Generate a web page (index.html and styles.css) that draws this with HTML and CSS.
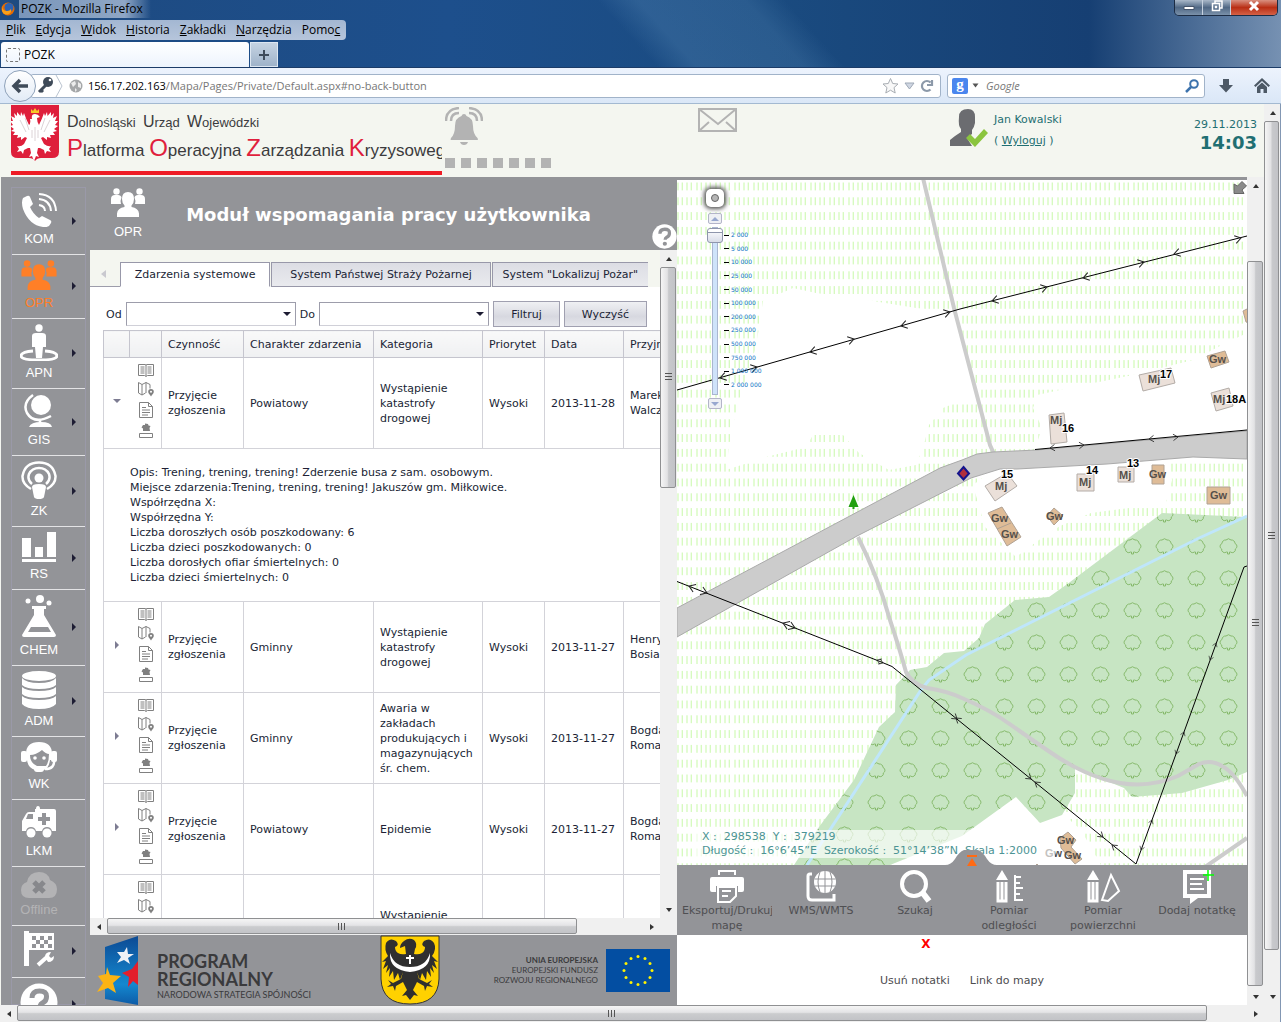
FILE: index.html
```html
<!DOCTYPE html>
<html lang="pl">

<head>
    <meta charset="UTF-8">
    <meta name="viewport" content="width=device-width, initial-scale=1.0">
    <title>POZK</title>
    <link rel="stylesheet" href="styles.css">
</head>

<body>
    <!-- shared icons -->
    <svg class="defs" width="0" height="0" aria-hidden="true">
        <symbol id="people" viewBox="0 0 34 30">
            <circle cx="5.500" cy="3.500" r="3.200" />
            <circle cx="28.500" cy="3.500" r="3.200" />
            <path d="M0 16v-5q0-4 4-4h3q3 0 3.500 2.500-1.500 3-.5 6.500zM34 16v-5q0-4-4-4h-3q-3 0-3.500 2.500 1.500 3 .5 6.500z" />
            <path d="M17 4q6 0 6 7 0 4-2.500 6.500v1.500q7 1 7.500 6.500V29H6v-3.500q.5-5.500 7.500-6.500v-1.500Q11 15 11 11q0-7 6-7z" />
        </symbol>
        <symbol id="book" viewBox="0 0 16 16">
            <path d="M.5 2.500h6.500l1 .5 1-.5h6.500v11H9.500L8 14.500 6.500 13.500H.5zM8 3v11M2.500 5h4M2.500 7h4M2.500 9h4M2.500 11h4M9.500 5h4M9.500 7h4M9.500 9h4M9.500 11h4" />
        </symbol>
        <symbol id="mapicon" viewBox="0 0 16 16">
            <path d="M.5 1.500 4 3.500l4-2 4 2v4M.5 1.500v10.500L4 14l3.500-2M4 3.500V14M8 1.500V12" />
            <path class="solid" d="M13 8a2.800 2.800 0 0 1 2.800 2.800c0 1.700-1.500 2.700-2.800 4.700-1.300-2-2.800-3-2.800-4.700A2.800 2.800 0 0 1 13 8zm0 1.800a1 1 0 1 0 0 2 1 1 0 0 0 0-2z" />
        </symbol>
        <symbol id="doc" viewBox="0 0 16 16">
            <path d="M1.500.5h9l4 4v11h-13zM10.500.5v4h4M4 5.500h4M4 8h8M4 10.500h8M4 13h6" />
        </symbol>
        <symbol id="stamp" viewBox="0 0 16 16">
            <path class="solid" d="M5 2h2V.5L10 1l.5 1.500 2 .5-1 2 .5 3H5V5.500L3.500 4.500z" />
            <path d="M1.500 10.500h13v4h-13z" />
        </symbol>
        <symbol id="rowicons" viewBox="0 0 16 79">
            <use href="#book" y="0" width="16" height="16" />
            <use href="#mapicon" y="19" width="16" height="16" />
            <use href="#doc" y="40" width="16" height="16" />
            <use href="#stamp" y="61" width="16" height="16" />
        </symbol>
        <symbol id="qmark" viewBox="0 0 38 38">
            <circle cx="19" cy="19" r="18.500" fill="#fff" />
            <path d="M12 15q0-7 7.500-7t7 6q0 4-4 6-2.500 1.500-2.500 4" fill="none" stroke="#939498" stroke-width="5" />
            <circle cx="19.500" cy="30" r="3.200" fill="#939498" />
        </symbol>
    </svg>

    <!-- browser window -->
    <div class="chrome">
        <div class="title-row">
            <svg width="14" height="14" viewBox="0 0 14 14"><circle cx="7" cy="7" r="6.500" fill="#e66a00" /><circle cx="8" cy="5.500" r="4.500" fill="#2c62b4" /><path d="M1 3q0 6 5 6 3 0 4-2 1 3-2 5Q3 14 1 9z" fill="#f9a01b" /></svg>
            <span class="win-title">POZK - Mozilla Firefox</span>
            <div class="win-buttons">
                <button type="button" aria-label="Minimalizuj"><svg width="12" height="12" viewBox="0 0 12 12"><path d="M1 6.500h10v3H1z" fill="#fff" stroke="#45546b" /></svg></button>
                <button type="button" aria-label="Przywróć"><svg width="12" height="12" viewBox="0 0 12 12"><path d="M4 3V1h7v7H9M1.500 3.500h7v7h-7zM4.500 6.500h1v1h-1z" fill="none" stroke="#fff" stroke-width="1.500" /></svg></button>
                <button type="button" class="close" aria-label="Zamknij"><svg width="12" height="12" viewBox="0 0 12 12"><path d="m2 2 8 8M10 2l-8 8" stroke="#fff" stroke-width="3" /></svg></button>
            </div>
        </div>
        <nav class="menu">
            <a href="#"><u>P</u>lik</a>
            <a href="#"><u>E</u>dycja</a>
            <a href="#"><u>W</u>idok</a>
            <a href="#"><u>H</u>istoria</a>
            <a href="#"><u>Z</u>akładki</a>
            <a href="#"><u>N</u>arzędzia</a>
            <a href="#">Pomo<u>c</u></a>
        </nav>
        <div class="browser-tabs">
            <div class="browser-tab"><i></i>POZK</div>
            <button type="button" class="new-tab" aria-label="Nowa karta"><svg width="12" height="12" viewBox="0 0 12 12"><path d="M6 1v10M1 6h10" stroke="#3f4c5c" stroke-width="2" /></svg></button>
        </div>
    </div>
    <div class="toolbar">
        <button type="button" class="back" aria-label="Wstecz"><svg width="18" height="16" viewBox="0 0 18 16"><path d="M17 8H4M9 2 3 8l6 6" fill="none" stroke="#3f4b59" stroke-width="3.500" /></svg></button>
        <div class="address">
            <svg width="34" height="22" viewBox="2 0 34 22"><path d="M6 17 13 10M8 15l2 2" stroke="#3f4b59" stroke-width="3" /><circle cx="15" cy="7" r="5" fill="#3f4b59" /><circle cx="17" cy="5" r="1.300" fill="#fff" /><path d="m23 0 6 11-6 11" fill="none" stroke="#b9c3cf" /></svg>
            <svg width="14" height="14" viewBox="0 0 14 14"><circle cx="7" cy="7" r="6.500" fill="#a5a7a9" /><path d="M2 4l4-2 1 3-3 3zM9 3l3 2v4l-3-1zM6 9l2 2-2 2z" fill="#ececec" /></svg>
            <label class="url"><b>156.17.202.163</b>/Mapa/Pages/Private/Default.aspx#no-back-button</label>
            <svg width="54" height="18" viewBox="0 0 54 18"><path d="m8.500 1.500 2.200 5 5.300.5-4 3.600 1.200 5.400-4.700-2.800L3.800 16 5 10.600 1 7l5.300-.5z" fill="#f8f8f8" stroke="#a8adb3" /><path d="M23 6h9l-4.500 6z" fill="#cfd6e2" stroke="#9ea8b6" /><path d="M48.500 12.500a5 5 0 1 1 0-7M50 3v5h-5" fill="none" stroke="#8c99a9" stroke-width="2.200" /></svg>
        </div>
        <div class="search">
            <span class="g">g</span>
            <svg width="7" height="5" viewBox="0 0 7 5"><path d="M.5.500h6l-3 4z" fill="#555" /></svg>
            <input type="text" placeholder="Google" aria-label="Szukaj w Google">
            <svg width="14" height="14" viewBox="0 0 14 14"><circle cx="9" cy="5" r="3.800" fill="none" stroke="#3d73ad" stroke-width="2" /><path d="M6 8l-5 5" stroke="#3d73ad" stroke-width="2.500" /></svg>
        </div>
        <svg class="down" width="14" height="14" viewBox="0 0 14 14"><path d="M4 0h6v6h4l-7 7.500L0 6h4z" fill="#4d5966" /></svg>
        <svg width="16" height="15" viewBox="0 0 16 15"><path d="m8 0 8 7.500-1.500 1.500L8 3 1.500 9 0 7.500zM3 9l5-4.500L13 9v6h-3.500v-4h-3v4H3z" fill="#4d5966" /></svg>
    </div>

    <div class="window">
        <div class="page">
            <header class="header">
                <div class="brand">
                    <svg width="48" height="56" viewBox="0 0 48 56">
                        <path d="M0 0h48v47q0 6-7 6H30q-4 0-6 3-2-3-6-3H7q-7 0-7-6z" fill="#de1f3b" />
                        <path d="M21 14q-1-5 3-5 3 0 5 3l-3 1q0 4 2 7 3-6 5-12l1 3 2-4 .5 4L40 7v4l3-3-1 5 4-2-2 5 3 0-3 4 3 1-4 3 3 2-4 1 2 3-5 0 1 3-4-1 0 3-4-3-2 1 3 6q4 3 7 2l-2 3 2 3-4-1-2 3-1-4-4-2-2 0-1 5 2 4-3-1-2 5-2-5-3 1 2-4-1-5-2 0-4 2-1 4-2-3-4 1 2-3-2-3q4 1 7-2l3-6-2-1-4 3 0-3-4 1 1-3-5 0 2-3-4-1 3-2-4-3 3-1-3-4h3l-2-5 4 2-1-5 3 3V7l3.500 4 .5-4 2 4 1-3q2 6 5 12 2-2 1-6z" fill="#fff" />
                        <path d="M20 8V4l2 2 2-3 2 3 2-2v4z" fill="#f7c928" />
                        <path d="M9 15l6 12M14 13l4 12M39 15l-6 12M34 13l-4 12M24 22v14M21 25v8M27 25v8" stroke="#dcd3d6" fill="none" />
                    </svg>
                    <div class="brand-text">
                        <p class="office"><b>D</b>olnośląski&nbsp; <b>U</b>rząd&nbsp; <b>W</b>ojewódzki</p>
                        <h1><b>P</b>latforma <b>O</b>peracyjna <b>Z</b>arządzania <b>K</b>ryzysowego</h1>
                    </div>
                </div>
                <div class="alerts">
                    <svg width="38" height="39" viewBox="0 0 38 39"><path d="M19 7q2 0 2.500 2Q28 11 28 19q0 8 4.500 12 1 2 0 2H6q-1 0 0-2 4-4 4-12 0-8 6.500-10Q17 7 19 7zM15 35h8q-1 3-4 3t-4-3z" fill="#b3b3b3" /><path d="M1 14Q1 2 14 1M6 14q0-8 8-8M37 14Q37 2 24 1M32 14q0-8-8-8" fill="none" stroke="#b3b3b3" stroke-width="2.500" /></svg>
                    <div class="squares"><i></i><i></i><i></i><i></i><i></i><i></i><i></i></div>
                </div>
                <svg class="mail" width="40" height="25" viewBox="0 0 40 25"><path d="M1 1h37v22H1zM1 1l19 15L38 1M1 23l10-9M38 23l-10-9" fill="none" stroke="#b3b3b3" stroke-width="2" /></svg>
                <div class="user">
                    <svg width="38" height="38" viewBox="0 0 38 38"><path d="M18 0q7 0 7 8v6q-1 5-3 7v4l-5 4 5 8H0V31q6-5 11-8v-3q-3-3-2-12 0-8 9-8z" fill="#6b6c70" /><path d="M17 29l4-4 5 5 9-10 4 4-13 14z" fill="#8bc53f" transform="translate(-1)" /></svg>
                    <div>Jan Kowalski<br>( <a href="#">Wyloguj</a> )</div>
                </div>
                <div class="clock">29.11.2013<strong>14:03</strong></div>
            </header>

            <div class="main">
                <div class="workspace">
                    <nav class="sidebar">
                        <a href="#"><span><svg width="36" height="34" viewBox="0 0 36 34"><path d="M2 5 6 3q2-1 3 1l3 7-3 3q3 7 9 11l3-2 8 4q2 1 1 3-2 5-8 4Q8 32 2 16 0 9 2 5z" /><path d="M18 12q6 1 6 6M18 6q11 1 12 12M18 1q16 1 17 17" fill="none" stroke="#fff" stroke-width="2" /></svg>KOM</span><i></i></a>
                        <a href="#" class="active"><span><svg width="36" height="31"><use href="#people" width="36" height="31" /></svg>OPR</span><i></i></a>
                        <a href="#"><span><svg width="38" height="37" viewBox="0 0 38 37"><circle cx="19" cy="4" r="3.700" /><path d="M12 12q0-3 4-3h6q4 0 4 3v11h-3l-1 11h-6l-1-11h-3z" /><path d="M13 27q-12 1-12 5 1 4 18 4t18-4q0-4-12-5" fill="none" stroke="#fff" stroke-width="3" /></svg>APN</span><i></i></a>
                        <a href="#"><span><svg width="32" height="34" viewBox="0 0 32 34"><circle cx="18" cy="11" r="10" /><path d="M10 1Q-1 9 4 19q7 12 24 3M17 25v4" fill="none" stroke="#fff" stroke-width="2.500" /><path d="M6 33q2-5 12-5t11 5z" /></svg>GIS</span><i></i></a>
                        <a href="#"><span><svg width="36" height="38" viewBox="0 0 36 38"><circle cx="18" cy="17" r="4.500" /><path d="M11 26q0-3 7-3t7 3l-2 10q-1 2-5 2t-5-2z" /><path d="M10 28Q1 23 1.500 15 4 1.500 18 1.500T34.500 15q.5 8-8.500 13M11 23q-5-4-3-10 3-6 10-6t10 6q2 6-3 10" fill="none" stroke="#fff" stroke-width="2.500" /></svg>ZK</span><i></i></a>
                        <a href="#"><span><svg width="34" height="30" viewBox="0 0 34 30"><path d="M0 6h9v19H0zM13 15h8v10h-8zM25 0h9v25h-9zM0 27h34v3H0z" /></svg>RS</span><i></i></a>
                        <a href="#"><span><svg width="34" height="43" viewBox="0 0 34 43"><circle cx="6" cy="6" r="2.500" /><circle cx="18" cy="4" r="4" /><circle cx="27" cy="8" r="2.500" /><path d="M10 11h14v3h-2v6l12 20q0 2-2 2H2q-2 0-2-2l12-20v-6h-2z" /><path d="M9 32h17l3 5H6z" fill="#939498" /></svg>CHEM</span><i></i></a>
                        <a href="#"><span><svg width="34" height="38" viewBox="0 0 34 38"><ellipse cx="17" cy="5" rx="17" ry="5" /><path d="M0 7q4 5 17 5t17-5v7q-4 4-17 4T0 14zM0 16q4 4 17 4t17-4v7q-4 4-17 4T0 23zM0 25q4 4 17 4t17-4v8q-4 5-17 5T0 33z" /></svg>ADM</span><i></i></a>
                        <a href="#"><span><svg width="36" height="30" viewBox="0 0 36 30"><path d="M5 12Q5 0 18 0t13 12v6h-2q-1 8-6 10h-9q-7-2-8-10H5z" /><path d="M9 13q6 0 12-5 4 4 7 4 0 8-3 12h-9q-7-3-7-11z" fill="#939498" /><path d="M33 18q1 9-9 9" fill="none" stroke="#fff" stroke-width="2.500" /><rect x="0" y="9" width="6" height="11" rx="2" /><rect x="30" y="9" width="6" height="11" rx="2" /><circle cx="14" cy="16" r="1.800" /><circle cx="23" cy="16" r="1.800" /><rect x="13" y="24" width="10" height="6" rx="3" /></svg>WK</span></a>
                        <a href="#"><span><svg width="34" height="34" viewBox="0 0 34 34"><path d="M13 4h1q0-3 2-3t2 3h14q2 0 2 2v20h-4q-1-4-5-4t-5 4h-6q-1-4-5-4t-5 4H0V16l4-7q1-2 3-2h6z" /><path d="M4 14l2-5h5v5zM20 8h4v4h4v4h-4v4h-4v-4h-4v-4h4z" fill="#939498" /><circle cx="9" cy="28" r="4.500" /><circle cx="25" cy="28" r="4.500" /></svg>LKM</span></a>
                        <a href="#" class="offline"><span><svg width="36" height="26" viewBox="0 0 36 26"><path d="M8 26q-8 0-8-8 0-6 6-8 2-10 12-10 9 0 11 8 7 3 7 9 0 9-8 9z" /><path d="m13 10 10 10M23 10 13 20" stroke="#87888c" stroke-width="5" /></svg>Offline</span></a>
                        <a href="#" class="tool"><span><svg width="32" height="36" viewBox="0 0 32 36"><path d="M1 0h5v35H1z" /><path d="M6 2h25v17H6z" /><path d="M9 5h4v4H9zM17 5h4v4h-4zM25 5h4v4h-4zM13 9h4v4h-4zM21 9h4v4h-4zM9 13h4v4H9zM17 13h4v4h-4zM25 13h4v4h-4z" fill="#939498" /><path d="M15 34l9-8" stroke="#fff" stroke-width="4" /><path d="M22 26q0-5 6-5l-2 4 2 2 3-2q0 6-6 6z" /></svg></span><i></i></a>
                        <a href="#" class="tool"><span><svg width="38" height="38"><use href="#qmark" width="38" height="38" /></svg></span><i></i></a>
                    </nav>

                    <section class="module">
                        <div class="module-title">
                            <div class="module-icon"><svg width="34" height="30"><use href="#people" width="34" height="30" /></svg>OPR</div>
                            <h2>Moduł wspomagania pracy użytkownika</h2>
                            <button type="button" class="help" aria-label="Pomoc"><svg width="25" height="25"><use href="#qmark" width="25" height="25" /></svg></button>
                        </div>
                        <div class="scroll-area">
                            <div class="content">
                                <div class="tabs">
                                    <span class="prev"></span>
                                    <button type="button" class="selected">Zdarzenia systemowe</button>
                                    <button type="button">System Państwej Straży Pożarnej</button>
                                    <button type="button">System "Lokalizuj Pożar"</button>
                                </div>
                                <form class="filter">
                                    <label for="from">Od</label>
                                    <div class="combo"><select id="from"><option></option></select></div>
                                    <label for="to">Do</label>
                                    <div class="combo"><select id="to"><option></option></select></div>
                                    <button type="button">Filtruj</button>
                                    <button type="button">Wyczyść</button>
                                </form>
                                <table class="events">
                                    <colgroup><col class="c1"><col class="c2"><col class="c3"><col class="c4"><col class="c5"><col class="c6"><col class="c7"><col class="c8"></colgroup>
                                    <thead>
                                        <tr><th></th><th></th><th>Czynność</th><th>Charakter zdarzenia</th><th>Kategoria</th><th>Priorytet</th><th>Data</th><th>Przyjmujący</th></tr>
                                    </thead>
                                    <tbody>
                                        <tr>
                                            <td class="toggle open"><i></i></td>
                                            <td class="acts"><svg width="16" height="79"><use href="#rowicons" width="16" height="79" /></svg></td>
                                            <td>Przyjęcie zgłoszenia</td><td>Powiatowy</td><td>Wystąpienie katastrofy drogowej</td><td>Wysoki</td><td>2013-11-28</td><td>Marek<br>Walczak</td>
                                        </tr>
                                        <tr class="detail">
                                            <td colspan="8">Opis: Trening, trening, trening! Zderzenie busa z sam. osobowym.<br>Miejsce zdarzenia:Trening, trening, trening! Jakuszów gm. Miłkowice.<br>Współrzędna X:<br>Współrzędna Y:<br>Liczba doroszłych osób poszkodowany: 6<br>Liczba dzieci poszkodowanych: 0<br>Liczba dorosłych ofiar śmiertelnych: 0<br>Liczba dzieci śmiertelnych: 0</td>
                                        </tr>
                                        <tr>
                                            <td class="toggle"><i></i></td>
                                            <td class="acts"><svg width="16" height="79"><use href="#rowicons" width="16" height="79" /></svg></td>
                                            <td>Przyjęcie zgłoszenia</td><td>Gminny</td><td>Wystąpienie katastrofy drogowej</td><td>Wysoki</td><td>2013-11-27</td><td>Henryk<br>Bosiak</td>
                                        </tr>
                                        <tr>
                                            <td class="toggle"><i></i></td>
                                            <td class="acts"><svg width="16" height="79"><use href="#rowicons" width="16" height="79" /></svg></td>
                                            <td>Przyjęcie zgłoszenia</td><td>Gminny</td><td>Awaria w zakładach produkujących i magazynujących śr. chem.</td><td>Wysoki</td><td>2013-11-27</td><td>Bogdan<br>Roman</td>
                                        </tr>
                                        <tr>
                                            <td class="toggle"><i></i></td>
                                            <td class="acts"><svg width="16" height="79"><use href="#rowicons" width="16" height="79" /></svg></td>
                                            <td>Przyjęcie zgłoszenia</td><td>Powiatowy</td><td>Epidemie</td><td>Wysoki</td><td>2013-11-27</td><td>Bogdan<br>Roman</td>
                                        </tr>
                                        <tr class="tall">
                                            <td class="toggle"><i></i></td>
                                            <td class="acts"><svg width="16" height="79"><use href="#rowicons" width="16" height="79" /></svg></td>
                                            <td></td><td></td><td>Wystąpienie katastrofy drogowej</td><td></td><td></td><td></td>
                                        </tr>
                                    </tbody>
                                </table>
                            </div>
                            <div class="vbar panel-v"><i class="up"></i><div class="track"><div class="thumb"></div></div><i class="dn"></i></div>
                            <div class="hbar panel-h"><i class="lt"></i><div class="track"><div class="thumb"></div></div><i class="rt"></i></div>
                        </div>
                        <footer class="logos">
                            <div class="program">
                                <svg width="44" height="70" viewBox="0 0 44 70"><defs><linearGradient id="sky" x2="0" y2="1"><stop offset="0" stop-color="#0c4a94" /><stop offset=".7" stop-color="#1488cf" /><stop offset="1" stop-color="#0d5ba7" /></linearGradient></defs><path d="M8 12 41 1v69L8 64z" fill="url(#sky)" /><path d="m30 12 1 7h6l-6 4 2 6-6-4-7 3 4-6-4-5h7z" fill="#eef1f6" /><path d="m41 26-6 8-10 4 7 4-1 10 5-6 5 4z" fill="#e31e2b" /><path d="m10 32 3 8 11 1-8 7 3 10-8-5-11 4 6-9-5-7 8-2z" fill="#fbb414" /></svg>
                                <div>
                                    <p class="name">PROGRAM<br>REGIONALNY</p>
                                    <p class="motto">NARODOWA STRATEGIA SPÓJNOŚCI</p>
                                </div>
                            </div>
                            <svg width="60" height="70" viewBox="0 0 60 70">
                                <path d="M1 1h58v43Q58 69 30 69T1 44z" fill="#ffd100" stroke="#333" />
                                <path d="M24 6q5-4 10-1 4 4 1 9l-1 5q5 1 8-1 3-2 3-6-5-2-1-6 6-4 10 2 3 6-2 13l6 6-4-1 3 8-5-4 2 8-4-5 1 9-4-6-1 9-4-7-2 7-3-8 2 7 8 4 5-3-3 4 4 3-6-1-2 5-1-5-7-4-4 8 5 6-4-1-4 5-4-5-4 1 5-6-4-8-7 4-1 5-2-5-6 1 4-3-3-4 5 3 8-4 2-7-3 8-2-7-4 7-1-9-4 6 1-9-4 5 2-8-5 4 3-8-4 1 6-6Q4 15 6 8q4-6 10-2 4 4-1 6 0 4 3 6 3 2 8 1l-1-8-5 2q0-4 4-7z" fill="#2f2f2f" />
                                <path d="M10 18q4 14 20 14t20-14q1 17-20 19Q9 35 10 18z" fill="#fff" /><path d="M30 20v9M26 23h8" stroke="#fff" stroke-width="2" />
                            </svg>
                            <div class="eu">
                                <p><b>UNIA EUROPEJSKA</b><br>EUROPEJSKI FUNDUSZ<br>ROZWOJU REGIONALNEGO</p>
                                <svg width="64" height="43" viewBox="0 0 64 43"><path d="M0 0h64v43H0z" fill="#034ea2" /><g fill="#fff200"><circle cx="32" cy="7.500" r="1.500" /><circle cx="39" cy="9.500" r="1.500" /><circle cx="44" cy="14.500" r="1.500" /><circle cx="46" cy="21.500" r="1.500" /><circle cx="44" cy="28.500" r="1.500" /><circle cx="39" cy="33.500" r="1.500" /><circle cx="32" cy="35.500" r="1.500" /><circle cx="25" cy="33.500" r="1.500" /><circle cx="20" cy="28.500" r="1.500" /><circle cx="18" cy="21.500" r="1.500" /><circle cx="20" cy="14.500" r="1.500" /><circle cx="25" cy="9.500" r="1.500" /></g></svg>
                            </div>
                        </footer>
                    </section>

                    <section class="map-panel">
                        <div class="map">
                            <svg class="map-canvas" viewBox="677 180 570 685" preserveAspectRatio="xMinYMin slice">
                                <defs>
                                    <pattern id="grass" x="962" y="182.500" width="19" height="14.800" patternUnits="userSpaceOnUse">
                                        <path d="M1 0v8M5.300 0v8M10 0v8M14.300 0v8" stroke="#d4fabc" stroke-width="1.300" />
                                    </pattern>
                                    <pattern id="trees" x="1116" y="530" width="32" height="32" patternUnits="userSpaceOnUse">
                                        <path d="M14.500 22a3 3 0 0 1-4.800-3 3 3 0 0 1 .3-5.500 3.500 3.500 0 0 1 4-3.500 3.500 3.500 0 0 1 5 0 3.500 3.500 0 0 1 4 3.500 3 3 0 0 1 .3 5.500 3 3 0 0 1-4.800 3h-1v2h-2v-2z" fill="none" stroke="#86b96c" />
                                    </pattern>
                                    <path id="al" d="M6-4 0 0l6 4" fill="none" stroke="#222" />
                                </defs>
                                <path d="M677 180h570v685H677z" fill="#fff" />
                                <path d="M677 180h570v685H677z" fill="url(#grass)" />
                                <!-- plots without grass -->
                                <path fill="#fff" d="M763 301l30-13 23 5 57 8 43 7 39 4 21 86-23 6-10 4-14 17-6 23-7 17-27 5-30-17-16-18h-30l-7 12-40 10-40 13 5-37 8-33 17-53z" />
                                <path fill="#fff" d="M1037 395l23-5 73-15 60-15 27-14 27-13v110h-210l5-15-9-20zM1000 465l-27 20 12 42 31 30 23-17 21-14 31-13 75-10 6-23-5-22zM946 840l70-43 23 25 23-9 19 17 20 35H890z" />
                                <!-- forest -->
                                <path d="M1162 513l85 4v255l-19 8-46 13-50 4-8-9-49-20v25l-13 22-22 8-24-26-54 39-72 29h-96l25-38 35-47 25-53 16-15 1-27 14-15 17-3 17-14 20-2 15-13 6-14 30-24 34-3 17-12z" fill="#c7e5c3" />
                                <path d="M1162 513l85 4v255l-19 8-46 13-50 4-8-9-49-20v25l-13 22-22 8-24-26-54 39-72 29h-96l25-38 35-47 25-53 16-15 1-27 14-15 17-3 17-14 20-2 15-13 6-14 30-24 34-3 17-12z" fill="url(#trees)" />
                                <path d="M1247 516l-50 23-231 116-37 25-8 10-114 175" fill="none" stroke="#bfe6fb" stroke-width="3" />
                                <!-- roads -->
                                <path d="M923 178l31 130 36 137 4 9M858 537q20 40 32 83 10 30 16 52 6 12 21 16 20 3 35 10 30 13 46 25l39 27q20 14 38 22t35 11q30 5 58-7l21-12q12-5 23 2 12 6 25 30M1247 838l-42 29" fill="none" stroke="#ccc" stroke-width="4" />
                                <path d="M677 608 940 468l22-8 15-6 16-2 44-2 210-19v28l-54-2-86 7-90 5h-17l-29 9-114 58-180 101z" fill="#ccc" stroke="#aaa" stroke-width="1" />
                                <!-- power lines -->
                                <path d="M677 390l283-81 287-73M1035 449.500l212-19.500M677 581.500l203 80 12 5L1136 864l108-297 3-1" fill="none" stroke="#000" />
                                <g>
                                    <use href="#al" transform="translate(720 378)rotate(-15)" /><use href="#al" transform="translate(757 367)rotate(165)" />
                                    <use href="#al" transform="translate(810 352)rotate(-15)" /><use href="#al" transform="translate(854 339)rotate(165)" />
                                    <use href="#al" transform="translate(901 326)rotate(-15)" /><use href="#al" transform="translate(950 312)rotate(165)" />
                                    <use href="#al" transform="translate(992 301)rotate(-15)" /><use href="#al" transform="translate(1047 287)rotate(165)" />
                                    <use href="#al" transform="translate(1083 278)rotate(-15)" /><use href="#al" transform="translate(1144 262)rotate(165)" />
                                    <use href="#al" transform="translate(1174 254)rotate(-15)" /><use href="#al" transform="translate(1241 238)rotate(165)" />
                                    <use href="#al" transform="translate(1050 448)rotate(-5)scale(.8)" /><use href="#al" transform="translate(1084 445)rotate(175)scale(.8)" />
                                    <use href="#al" transform="translate(1149 439)rotate(-5)scale(.8)" /><use href="#al" transform="translate(1178 437)rotate(175)scale(.8)" />
                                    <use href="#al" transform="translate(689 586)rotate(22)" /><use href="#al" transform="translate(707 593)rotate(202)" />
                                    <use href="#al" transform="translate(783 623)rotate(22)" /><use href="#al" transform="translate(795 628)rotate(202)" />
                                    <use href="#al" transform="translate(877 660)rotate(22)scale(.7)" /><use href="#al" transform="translate(883 663)rotate(202)scale(.7)" />
                                    <use href="#al" transform="translate(956 718)rotate(39)scale(.8)" /><use href="#al" transform="translate(957 719)rotate(219)scale(.8)" />
                                    <use href="#al" transform="translate(1031 779)rotate(219)scale(.8)" /><use href="#al" transform="translate(1035 782)rotate(39)scale(.8)" />
                                    <use href="#al" transform="translate(1103 837)rotate(219)scale(.8)" /><use href="#al" transform="translate(1112 845)rotate(39)scale(.8)" />
                                    <use href="#al" transform="translate(1141 850)rotate(-70)scale(.6)" /><use href="#al" transform="translate(1152 820)rotate(110)scale(.6)" />
                                    <use href="#al" transform="translate(1176 754)rotate(-70)scale(.6)" /><use href="#al" transform="translate(1184 732)rotate(110)scale(.6)" />
                                    <use href="#al" transform="translate(1210 660)rotate(-70)scale(.6)" /><use href="#al" transform="translate(1216 643)rotate(110)scale(.6)" />
                                </g>
                                <!-- buildings -->
                                <path d="M1139 375l32-7 4 15-32 8zM1211 393l18-5 4 18-17 5zM1049 415l15-2 3 29-16 2zM985 486l22-13 10 13-22 15zM1077 474h17v17h-17zM1118 467h16v15h-16z" fill="#ebe0d9" stroke="#b3aca7" />
                                <path d="M1243 311l6-3v15l-3-1zM1207 356l18-5 4 11-18 6zM1152 465h12v19h-12zM1207 487h23v17h-23zM1054 508l9 8-9 9-7-9zM988 513l14-6 19 30-14 9zM997 529l14-6M1060 838l8-6 8 8-5 7 11 12-7 5-14-16zM1035 866l2-2 2 2" fill="#dfbc97" stroke="#b0a294" />
                                <g class="labels">
                                    <text x="1148" y="383">Mj</text><text x="1213" y="403">Mj</text><text x="1050" y="424">Mj</text><text x="995" y="490">Mj</text><text x="1079" y="486">Mj</text><text x="1119" y="479">Mj</text>
                                    <text x="1209" y="363">Gw</text><text x="1149" y="478">Gw</text><text x="1210" y="499">Gw</text><text x="1046" y="520">Gw</text><text x="991" y="522">Gw</text><text x="1001" y="538">Gw</text><text x="1057" y="844">Gw</text><text x="1045" y="857">Gw</text><text x="1064" y="859">Gw</text>
                                </g>
                                <g class="numbers">
                                    <text x="1160" y="378">17</text><text x="1226" y="403">18A</text><text x="1062" y="432">16</text><text x="1001" y="478">15</text><text x="1086" y="474">14</text><text x="1127" y="467">13</text>
                                </g>
                                <path d="M963.500 467l5.500 6.500-5.500 6-5.500-6z" fill="#b02f3c" stroke="#14148c" stroke-width="2" />
                                <path d="M853.500 495l5 12h-4v2h-2v-2h-4z" fill="#22a010" />
                            </svg>

                            <div class="zoom">
                                <button type="button" class="pan" aria-label="Przesuń mapę"><i></i></button>
                                <button type="button" class="step" aria-label="Przybliż"><i class="tri-up"></i></button>
                                <div class="scale">
                                    <input type="range" min="0" max="100" value="0" aria-label="Skala mapy">
                                    <ul>
                                        <li>2 000</li><li>5 000</li><li>10 000</li><li>25 000</li><li>50 000</li><li>100 000</li><li>200 000</li><li>250 000</li><li>500 000</li><li>750 000</li><li>1 000 000</li><li>2 000 000</li>
                                    </ul>
                                </div>
                                <button type="button" class="step" aria-label="Oddal"><i class="tri-dn"></i></button>
                            </div>
                            <svg class="shrink" width="14" height="14" viewBox="0 0 14 14"><path d="m9 .5 4.500 4.500-4.500 4 2 3.500H1V3l3.500 2z" fill="#8a8a8a" stroke="#666" /></svg>
                            <div class="coords">X :&nbsp; 298538&nbsp; Y :&nbsp; 379219<br>Długość :&nbsp; 16°6’45”E&nbsp; Szerokość :&nbsp; 51°14’38”N&nbsp; Skala 1:2000</div>
                            <svg class="pull" width="52" height="18" viewBox="0 0 52 18"><path d="M0 16q6 0 10-6 4-7 9-9h14q5 2 9 9 4 6 10 6v2H0z" fill="#939498" /><path d="M22 6h10v2H22zM27 9l5 8H22z" fill="#ff6a13" /></svg>
                        </div>
                        <div class="map-tools">
                            <button type="button"><svg width="34" height="34" viewBox="0 0 34 34"><path d="M9 5V1h16v4M7 15h20" /><path class="w" d="M2 7h30q2 0 2 2v11q0 2-2 2h-4v-6H6v6H2q-2 0-2-2V9q0-2 2-2z" /><path d="M8 17h18v9l-6 6H8zM12 21h9M12 26h6" /></svg><span class="nowrap">Eksportuj/Drukuj</span> mapę</button>
                            <button type="button"><svg width="32" height="34" viewBox="0 0 32 34"><path d="M7 4H5Q3 4 3 6v20q0 4 4 4h22v-6" stroke-width="3" /><circle class="w" cx="20" cy="12" r="11" /><path d="M20 1v22M9.500 9h21M9.500 16h21M15 2q-4 10 0 20M25 2q4 10 0 20" stroke="#939498" stroke-width="1" /></svg>WMS/WMTS</button>
                            <button type="button"><svg width="34" height="34" viewBox="0 0 34 34"><circle cx="16" cy="14" r="12" stroke-width="4" /><path d="m24 22 7 9" stroke-width="6" /></svg>Szukaj</button>
                            <button type="button"><svg width="34" height="34" viewBox="0 0 34 34"><path class="w" d="M4 10 10 0l6 10z" /><path d="M6 12v19h8V12M10 12v20" stroke-width="3" /><path d="M23 5v26M23 7h6M23 13h5M23 18h8M23 24h5M23 30h8" /></svg>Pomiar odległości</button>
                            <button type="button"><svg width="36" height="34" viewBox="0 0 36 34"><path class="w" d="M2 10 8 0l6 10z" /><path d="M4 12v19h8V12M8 12v20" stroke-width="3" /><path d="M17 30l9-25 8 16-11 10z" /></svg>Pomiar powierzchni</button>
                            <button type="button"><svg width="34" height="34" viewBox="0 0 34 34"><path class="w" d="M3 0h28v28H18l-8 6v-6H3z" /><path d="M7 4h20v20H7z" fill="#939498" stroke="none" /><path d="M10 9h14M10 14h12M10 19h14" /><path d="M28 0v11M23 5h11" stroke="#0f0" stroke-width="1.500" /></svg>Dodaj notatkę</button>
                        </div>
                        <div class="map-links">
                            <button type="button" class="x">X</button>
                            <div><a href="#">Usuń notatki</a><a href="#">Link do mapy</a></div>
                        </div>
                    </section>
                </div>
                <div class="vbar map-v"><i class="up"></i><div class="track"><div class="thumb"></div></div><i class="dn"></i></div>
            </div>
        </div>
        <div class="vbar page-v"><i class="up"></i><div class="track"><div class="thumb"></div></div><i class="dn"></i></div>
        <div class="hbar page-h"><i class="lt"></i><div class="track"><div class="thumb"></div></div><i class="rt"></i></div>
    </div>
</body>

</html>
```
FILE: styles.css
```css
* {
    box-sizing: border-box;
    margin: 0;
    padding: 0;
}

body {
    display: flex;
    flex-direction: column;
    height: 100vh;
    overflow: hidden;
    background-color: #f4f6f0;
    color: #201f35;
    font: 11px/15px "DejaVu Sans", Verdana, sans-serif;
}

button,
input,
select {
    font: inherit;
    color: inherit;
    border: 0;
    background: none;
}

a {
    color: inherit;
    text-decoration: none;
}

svg {
    flex: none;
    display: block;
}

.defs {
    position: absolute;
}

/* browser window */
.chrome {
    flex: none;
    background: linear-gradient(48deg, transparent 49%, rgba(90, 140, 185, .3) 52%, rgba(90, 140, 185, .25) 60%, transparent 63%),
        linear-gradient(to right, #1e4a80, #1d4f8c 35%, #1a4b80 60%, #163f73 85%, #7691b2 100%);
    border-bottom: 1px solid #1c3c68;
    color: #000;
    font: 12px/18px "Open Sans", "Noto Sans", sans-serif;
}

.title-row {
    display: flex;
    align-items: flex-start;
    gap: 4px;
    height: 20px;
    padding: 0 3px 0 1px;
}

.title-row > svg {
    margin-top: 2px;
}

.win-title {
    padding: 0 8px 0 2px;
    background: linear-gradient(to right, #7a96ba, #8ea6c5 80%, transparent);
}

.win-buttons {
    display: flex;
    margin-left: auto;
    border: 1px solid #1c2c44;
    border-top: 0;
    border-radius: 0 0 5px 5px;
    overflow: hidden;
}

.win-buttons button {
    display: flex;
    justify-content: center;
    width: 28px;
    height: 15px;
    border-right: 1px solid #c5d1df;
    background: linear-gradient(#a9b8c9, #506885 50%, #7b91aa);
}

.win-buttons .close {
    width: 46px;
    border: 0;
    background: linear-gradient(#d99080, #b92f15 50%, #d56146);
}

.menu {
    display: flex;
    gap: 10px;
    width: max-content;
    height: 20px;
    padding: 1px 6px;
    border-radius: 0 4px 4px 0;
    background: linear-gradient(#a3b7d2, #b6c5db);
}

.browser-tabs {
    display: flex;
    gap: 1px;
    padding-top: 2px;
}

.browser-tab {
    display: flex;
    align-items: center;
    gap: 4px;
    width: 248px;
    height: 25px;
    margin-left: 1px;
    padding-left: 5px;
    border-radius: 3px 3px 0 0;
    background: linear-gradient(#fff, #edf4fd);
}

.browser-tab i {
    width: 14px;
    height: 14px;
    border: 1px dashed #777;
    border-radius: 2px;
}

.new-tab {
    display: flex;
    align-items: center;
    justify-content: center;
    width: 28px;
    border: 1px solid #dce6f1;
    background: linear-gradient(#c5d3e2, #9fb3ca);
}

.toolbar {
    flex: none;
    display: flex;
    align-items: center;
    height: 36px;
    padding: 0 11px 0 4px;
    border-bottom: 1px solid #a3b9d1;
    background: linear-gradient(#edf3fd, #dae7f7);
    font: 11px/18px "Open Sans", "Noto Sans", sans-serif;
}

.back {
    display: flex;
    align-items: center;
    justify-content: center;
    flex: none;
    width: 32px;
    height: 32px;
    border: 1px solid #8fa2ba;
    border-radius: 50%;
    background: linear-gradient(#fff, #e2ebf6);
    z-index: 1;
}

.address,
.search {
    display: flex;
    align-items: center;
    height: 24px;
    border: 1px solid #a1b3c9;
    border-radius: 3px;
    background-color: #fff;
}

.address {
    flex: 1;
    margin-left: -6px;
    padding: 0 4px;
}

.url {
    flex: 1;
    padding-left: 5px;
    color: #777;
    white-space: nowrap;
}

.url b {
    color: #000;
    font-weight: normal;
}

.search {
    width: 258px;
    gap: 4px;
    margin: 0 14px 0 6px;
    padding: 0 5px 0 4px;
}

.search input {
    flex: 1;
    min-width: 0;
    padding-left: 3px;
    outline: 0;
}

.search input::placeholder {
    color: #777;
    font-style: italic;
}

.search .g {
    width: 16px;
    height: 16px;
    border-radius: 2px;
    background-color: #4a86ee;
    color: #fff;
    font: bold 15px/12px "Liberation Serif", serif;
    text-align: center;
}

.down {
    margin-right: 21px;
}

/* page and its scrollbars */
.window {
    flex: 1;
    min-height: 0;
    display: grid;
    grid-template: minmax(0, 1fr) 17px / minmax(0, 1fr) 16px;
    border-right: 1px solid #8297b3;
    background-color: #f0f0f0;
}

.page {
    display: flex;
    flex-direction: column;
    min-height: 0;
    background-color: #f4f6f0;
}

.vbar,
.hbar {
    display: flex;
    background-color: #f0f0f0;
}

.vbar {
    flex: none;
    flex-direction: column;
}

.vbar > i,
.hbar > i {
    display: flex;
    flex: none;
    align-items: center;
    justify-content: center;
    width: 17px;
    height: 17px;
}

.vbar > i::before,
.hbar > i::before {
    content: "";
    border: 3px solid transparent;
}

.up::before {
    border-bottom: 4px solid #333 !important;
    border-top: 0 !important;
}

.dn::before {
    border-top: 4px solid #333 !important;
    border-bottom: 0 !important;
}

.lt::before {
    border-right: 4px solid #333 !important;
    border-left: 0 !important;
}

.rt::before {
    border-left: 4px solid #333 !important;
    border-right: 0 !important;
}

.track {
    flex: 1;
    display: flex;
    min-width: 0;
    min-height: 0;
}

.vbar .track {
    flex-direction: column;
}

.track::before,
.track::after {
    content: "";
}

.thumb {
    display: flex;
    align-items: center;
    justify-content: center;
    border: 1px solid #8f9092;
    border-radius: 2px;
    background: linear-gradient(to right, #f5f5f5, #e2e2e4 45%, #c8c9cc 55%, #c2c3c7);
}

.vbar .thumb {
    margin-right: 1px;
}

.hbar .thumb {
    margin-bottom: 1px;
    background: linear-gradient(#f5f5f5, #e4e4e6 45%, #cbccce 55%, #c2c3c7);
}

.thumb::before {
    content: "";
    width: 7px;
    height: 8px;
    background: repeating-linear-gradient(#555 0 1px, transparent 1px 3px);
}

.hbar .thumb::before {
    width: 8px;
    height: 7px;
    background: repeating-linear-gradient(to right, #555 0 1px, transparent 1px 3px);
}

.page-v .thumb {
    flex: 828;
}

.page-v .track::after {
    flex: 38;
}

.page-h .thumb {
    flex: 1190;
}

.page-h .track::after {
    flex: 40;
}

.map-v .track::before {
    flex: 67;
}

.map-v .thumb {
    flex: 725;
}

.map-v .track::after {
    flex: 2;
}

.panel-v .thumb {
    flex: 219;
}

.panel-v .track::after {
    flex: 414;
}

.panel-h .thumb {
    flex: 470;
}

.panel-h .track::after {
    flex: 66;
}

/* header */
.header {
    flex: none;
    display: grid;
    grid-template-columns: 434px 253fr 252fr 120fr 187fr;
    height: 73px;
    padding: 1px 7px 0 11px;
    color: #1f6f72;
}

.brand {
    display: flex;
    gap: 8px;
    width: 431px;
    height: 70px;
    border-bottom: 4px solid #ee1c25;
    overflow: hidden;
}

.brand-text {
    font-family: "Liberation Sans", Arial, sans-serif;
    color: #3b3b3d;
    white-space: nowrap;
}

.brand-text b {
    font-weight: normal;
}

.office {
    padding-top: 7px;
    font-size: 13px;
    line-height: 20px;
}

.office b {
    font-size: 16px;
}

.brand-text h1 {
    font-size: 17px;
    font-weight: normal;
    line-height: 30px;
}

.brand-text h1 b {
    color: #e01f3d;
    font-size: 24px;
}

.alerts {
    padding-top: 2px;
}

.squares {
    display: flex;
    gap: 6px;
    padding-top: 12px;
}

.squares i {
    width: 10px;
    height: 10px;
    background-color: #b3b3b3;
}

.mail {
    margin-top: 3px;
}

.user {
    display: flex;
    gap: 6px;
    padding-top: 4px;
    line-height: 21px;
    white-space: nowrap;
}

.user a {
    text-decoration: underline;
}

.clock {
    padding-top: 12px;
    text-align: right;
}

.clock strong {
    display: block;
    font-size: 18px;
    line-height: 22px;
}

/* main area */
.main {
    flex: 1;
    display: flex;
    min-height: 0;
}

.workspace {
    flex: 1;
    display: flex;
    min-width: 0;
    margin-left: 1px;
    border-top: 3px solid #939498;
    background-color: #939498;
    overflow: hidden;
}

.sidebar {
    flex: none;
    width: 75px;
    margin: 7px 4px 0 10px;
    border: 1px solid #9a99a8;
    font: 13px/18px "Liberation Sans", Arial, sans-serif;
    color: #fff;
}

.sidebar a {
    display: flex;
    align-items: center;
    padding-top: 5px;
    border-bottom: 1px solid #e3e3e5;
    fill: currentColor;
}

.sidebar span {
    display: flex;
    flex-direction: column;
    align-items: center;
    gap: 3px;
    width: 54px;
    padding-bottom: 6px;
}

.sidebar .tool span {
    padding-bottom: 10px;
}

.sidebar a > i {
    margin: 0 0 6px 6px;
    border: 4px solid transparent;
    border-left-color: #1d1c33;
    border-right: 0;
}

.sidebar .active {
    color: #ff7f27;
}

.sidebar .offline {
    color: #b3b3b5;
}

.module {
    flex: 587 1 0;
    display: flex;
    flex-direction: column;
    min-width: 0;
}

.module-title {
    flex: none;
    display: flex;
    align-items: center;
    height: 70px;
    padding-left: 21px;
    color: #fff;
}

.module-icon {
    display: flex;
    flex-direction: column;
    align-items: center;
    gap: 5px;
    padding-bottom: 2px;
    font: 13px/18px "Liberation Sans", Arial, sans-serif;
    fill: #fff;
}

.module-title h2 {
    flex: 1;
    padding-right: 20px;
    font-size: 18px;
    line-height: 24px;
    text-align: center;
    white-space: nowrap;
}

.help {
    align-self: flex-end;
    margin-bottom: 1px;
}

.scroll-area {
    flex: 1;
    display: grid;
    grid-template: minmax(0, 1fr) 17px / minmax(0, 1fr) 17px;
    min-height: 0;
    background-color: #f0f0f0;
}

.content {
    overflow: hidden;
    background-color: #fff;
}

.tabs {
    display: grid;
    grid-template-columns: 29px 151fr 220fr 157fr;
    align-items: end;
    column-gap: 1px;
    height: 37px;
    padding-right: 12px;
    background-color: #f4f6f0;
    white-space: nowrap;
}

.tabs .prev {
    align-self: stretch;
    display: flex;
    align-items: center;
    margin-right: -1px;
    padding: 12px 0 0 11px;
    border-bottom: 1px solid #9d9dab;
}

.prev::before {
    content: "";
    border: 4px solid transparent;
    border-right: 5px solid #c9c9cf;
    border-left: 0;
}

.tabs button {
    height: 25px;
    min-width: 0;
    border: 1px solid #9898a9;
    background: linear-gradient(#dcdde4, #e9eaee);
}

.tabs button:last-child {
    border-right: 0;
}

.tabs .selected {
    border-bottom-color: #fff;
    background: #fff;
}

.filter {
    display: flex;
    align-items: center;
    gap: 4px;
    padding: 14px 13px 3px 16px;
}

.combo {
    position: relative;
    flex: 1;
    border: 1px solid #9d9dab;
    border-bottom-color: #d0d0d8;
}

.combo::after {
    content: "";
    position: absolute;
    right: 4px;
    top: 9px;
    border: 4px solid transparent;
    border-top-color: #1d1c33;
    border-bottom: 0;
    pointer-events: none;
}

.combo select {
    display: block;
    width: 100%;
    height: 22px;
    appearance: none;
    background-color: #fff;
}

.filter button {
    height: 26px;
    padding: 0 17px;
    border: 1px solid #a0a0b0;
    background: linear-gradient(#eff0f3, #d7d8e0 60%, #e5e6eb);
}

.events {
    width: 660px;
    margin-left: 13px;
    border-collapse: collapse;
    table-layout: fixed;
    border-top: 1px solid #9898a9;
    border-left: 1px solid #9898a9;
}

.c1 { width: 26px; }
.c2 { width: 32px; }
.c3 { width: 82px; }
.c4 { width: 130px; }
.c5 { width: 109px; }
.c6 { width: 62px; }
.c7 { width: 79px; }

.events th {
    height: 27px;
    padding: 0 6px;
    border: 1px solid #c5c5ce;
    background: linear-gradient(#f9f9f9, #eff0f2);
    font-weight: normal;
    text-align: left;
    white-space: nowrap;
}

.events td {
    height: 91px;
    padding: 0 0 0 6px;
    border: 1px solid #d3d3d9;
}

.events .toggle {
    padding: 0;
    border-right: 0;
}

.toggle + td {
    border-left: 0;
}

.toggle i {
    display: block;
    width: 0;
    margin: 0 auto 4px;
    border: 4px solid transparent;
    border-left-color: #7d7c92;
    border-right: 0;
}

.toggle.open i {
    border-top-color: #7d7c92;
    border-right: 4px solid transparent;
    border-left-color: transparent;
    border-bottom: 0;
}

.events .acts {
    padding: 4px 0 0 8px;
    vertical-align: top;
    fill: none;
    stroke: #808080;
}

.solid {
    fill: #808080;
    stroke: none;
}

.events .detail td {
    height: 153px;
    padding-left: 26px;
}

.events .tall td {
    height: 111px;
}

.logos {
    flex: none;
    display: grid;
    grid-template-columns: 283fr 60px 230fr;
    align-items: center;
    height: 70px;
    padding: 0 7px;
    color: #3a3a3c;
    font-family: Lato, "Open Sans", sans-serif;
}

.program {
    display: flex;
    gap: 16px;
}

.program .name {
    padding-top: 17px;
    font-size: 18px;
    font-weight: bold;
    line-height: 18px;
}

.program .motto {
    font-size: 9px;
    line-height: 14px;
}

.eu {
    display: flex;
    align-items: center;
    justify-content: flex-end;
    gap: 8px;
    font-size: 8px;
    line-height: 10px;
    text-align: right;
}

/* map */
.map-panel {
    flex: 570 1 0;
    display: flex;
    flex-direction: column;
    min-width: 0;
    background-color: #fff;
}

.map {
    position: relative;
    flex: 1;
    min-height: 0;
}

.map-canvas {
    position: absolute;
    width: 100%;
    height: 100%;
}

.labels,
.numbers {
    font: bold 11px "Liberation Sans", Arial, sans-serif;
    fill: #56504b;
}

.numbers {
    fill: #000;
    stroke: #fff;
    stroke-width: 2px;
    paint-order: stroke;
}

.zoom {
    position: absolute;
    left: 27px;
    top: 8px;
    display: flex;
    flex-direction: column;
    align-items: flex-start;
    padding-left: 3px;
}

.pan {
    display: flex;
    align-items: center;
    justify-content: center;
    width: 18px;
    height: 18px;
    margin: 1px 0 6px -1px;
    border-radius: 5px;
    background-color: #fff;
    box-shadow: 0 0 4px 2px #555;
}

.pan i {
    width: 8px;
    height: 8px;
    border: 1px solid #666;
    border-radius: 50%;
    background-color: #b5b5b5;
}

.step {
    display: flex;
    align-items: center;
    justify-content: center;
    width: 14px;
    height: 11px;
    margin-left: 1px;
    border: 1px solid #b3b5c9;
    border-radius: 2px;
    background-color: #eef0f4;
}

.step i {
    border: 4px solid transparent;
}

.step .tri-up {
    border-bottom-color: #98a8cf;
    border-top: 0;
}

.step .tri-dn {
    border-top-color: #98a8cf;
    border-bottom: 0;
}

.scale {
    display: flex;
    gap: 1px;
    padding: 3px 0;
}

.scale input {
    appearance: none;
    writing-mode: vertical-lr;
    width: 16px;
    height: 168px;
}

.scale input::-webkit-slider-runnable-track {
    width: 6px;
    height: 100%;
    border: 1px solid #a9b6d0;
    background-color: #cfe3fa;
}

.scale input::-webkit-slider-thumb {
    appearance: none;
    width: 16px;
    height: 15px;
    margin-left: -6px;
    border: 1px solid #8f96ac;
    border-radius: 3px;
    background: linear-gradient(#fff 3px, #8f96ac 3px 4px, #f4f5f9 4px, #d9dde8);
}

.scale ul {
    display: flex;
    flex-direction: column;
    justify-content: space-between;
    height: 160px;
    margin-top: 3px;
    list-style: none;
    color: #0a72c4;
    font-size: 6px;
    line-height: 10px;
}

.scale li {
    display: flex;
    align-items: center;
    gap: 2px;
    white-space: nowrap;
}

.scale li::before {
    content: "";
    width: 5px;
    height: 1px;
    background-color: #000;
}

.shrink {
    position: absolute;
    top: 1px;
    right: 0;
}

.coords {
    position: absolute;
    left: 18px;
    bottom: 7px;
    padding: 0 18px 0 7px;
    background-color: rgba(255, 255, 255, .65);
    color: #4c9494;
    line-height: 14px;
    white-space: nowrap;
}

.pull {
    position: absolute;
    left: 47%;
    bottom: -2px;
}

.map-tools {
    flex: none;
    display: flex;
    height: 70px;
    padding: 5px 3px 0;
    background-color: #939498;
    color: #4f4f52;
    overflow: hidden;
}

.map-tools button {
    flex: 1 1 0;
    display: flex;
    flex-direction: column;
    align-items: center;
    min-width: 0;
    padding: 0 2px;
    overflow: hidden;
}

.map-tools svg {
    margin-bottom: -1px;
    fill: none;
    stroke: #fff;
    stroke-width: 2;
}

.map-tools .w {
    fill: #fff;
    stroke: none;
}

.nowrap {
    align-self: stretch;
    overflow: hidden;
    text-align: left;
    white-space: nowrap;
}

.map-links {
    flex: none;
    display: flex;
    flex-direction: column;
    align-items: center;
    gap: 21px;
    height: 70px;
    padding-top: 2px;
    color: #4d4d4f;
}

.map-links div {
    display: flex;
    gap: 20px;
}

.map-links .x {
    margin-right: 72px;
    color: #f00;
    font-size: 12px;
    font-weight: bold;
}
```
